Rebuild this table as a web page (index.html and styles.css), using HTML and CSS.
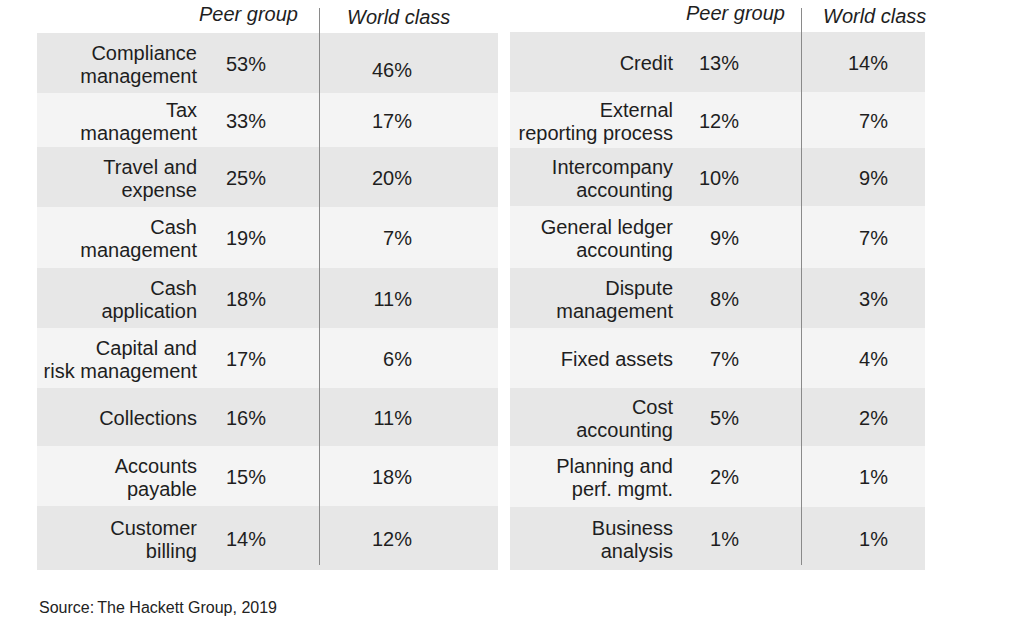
FILE: index.html
```html
<!DOCTYPE html>
<html>
<head>
<meta charset="utf-8">
<link rel="stylesheet" href="styles.css">
</head>
<body>
<div class="page">
  <div class="tables">
    <div class="tbl tbl-left">
      <div class="row head">
        <div class="hpeer">Peer group</div>
        <div class="hworld">World class</div>
      </div>
      <div class="row dark"><div class="lab">Compliance<br>management</div><div class="peer">53%</div><div class="world low">46%</div></div>
      <div class="row light"><div class="lab">Tax<br>management</div><div class="peer">33%</div><div class="world">17%</div></div>
      <div class="row dark"><div class="lab">Travel and<br>expense</div><div class="peer">25%</div><div class="world">20%</div></div>
      <div class="row light"><div class="lab">Cash<br>management</div><div class="peer">19%</div><div class="world">7%</div></div>
      <div class="row dark"><div class="lab">Cash<br>application</div><div class="peer">18%</div><div class="world">11%</div></div>
      <div class="row light"><div class="lab">Capital and<br>risk management</div><div class="peer">17%</div><div class="world">6%</div></div>
      <div class="row dark"><div class="lab">Collections</div><div class="peer">16%</div><div class="world">11%</div></div>
      <div class="row light"><div class="lab">Accounts<br>payable</div><div class="peer">15%</div><div class="world">18%</div></div>
      <div class="row dark last"><div class="lab">Customer<br>billing</div><div class="peer">14%</div><div class="world">12%</div></div>
    </div>
    <div class="tbl tbl-right">
      <div class="row head">
        <div class="hpeer">Peer group</div>
        <div class="hworld">World class</div>
      </div>
      <div class="row dark"><div class="lab">Credit</div><div class="peer">13%</div><div class="world">14%</div></div>
      <div class="row light"><div class="lab">External<br>reporting process</div><div class="peer">12%</div><div class="world">7%</div></div>
      <div class="row dark"><div class="lab">Intercompany<br>accounting</div><div class="peer">10%</div><div class="world">9%</div></div>
      <div class="row light"><div class="lab">General ledger<br>accounting</div><div class="peer">9%</div><div class="world">7%</div></div>
      <div class="row dark"><div class="lab">Dispute<br>management</div><div class="peer">8%</div><div class="world">3%</div></div>
      <div class="row light"><div class="lab">Fixed assets</div><div class="peer">7%</div><div class="world">4%</div></div>
      <div class="row dark"><div class="lab">Cost<br>accounting</div><div class="peer">5%</div><div class="world">2%</div></div>
      <div class="row light"><div class="lab">Planning and<br>perf. mgmt.</div><div class="peer">2%</div><div class="world">1%</div></div>
      <div class="row dark last"><div class="lab">Business<br>analysis</div><div class="peer">1%</div><div class="world">1%</div></div>
    </div>
  </div>
  <p class="source">Source:&thinsp;The Hackett Group, 2019</p>
</div>
</body>
</html>
```

FILE: styles.css
```css
html, body {
  margin: 0;
  padding: 0;
  background: #ffffff;
}

body {
  font-family: "Liberation Sans", Arial, sans-serif;
  color: #1e1e1e;
  width: 1017px;
  height: 641px;
  overflow: hidden;
}

.page {
  padding-left: 37px;
}

.tables {
  display: flex;
  gap: 12px;
  align-items: flex-start;
}

.tbl {
  display: grid;
  font-size: 20px;
  line-height: 23px;
}

.tbl-left {
  width: 461px;
  grid-template-rows: 33px 60px 54px 60px 61px 60px 60px 58px 60px 64px;
  --cols: 173px 109px 179px;
  --peer-pad: 53px;
  --world-pad: 86px;
  --lab-pad: 13px;
}

.tbl-right {
  width: 415px;
  grid-template-rows: 32px 60px 56px 58px 62px 60px 60px 58px 61px 63px;
  --cols: 175px 116px 124px;
  --peer-pad: 62px;
  --world-pad: 37px;
  --lab-pad: 12px;
}

.row {
  display: grid;
  grid-template-columns: var(--cols);
  align-items: center;
}

.dark { background: #e7e7e7; }
.light { background: #f4f4f4; }

.lab {
  text-align: right;
  padding-right: var(--lab-pad);
  padding-top: 3px;
}

.peer {
  text-align: right;
  padding-right: var(--peer-pad);
  padding-top: 2px;
}

.world {
  align-self: stretch;
  display: flex;
  align-items: center;
  justify-content: flex-end;
  padding-right: var(--world-pad);
  padding-top: 2px;
  border-left: 1px solid #8a8a8a;
}

.world.low {
  padding-top: 14px;
}

.last .world {
  border-left: none;
  padding-left: 1px;
  background: linear-gradient(#8a8a8a, #8a8a8a) left top / 1px calc(100% - 5px) no-repeat;
}

/* header */
.head {
  align-items: stretch;
  background: #ffffff;
}

.hpeer {
  grid-column: 1 / 3;
  text-align: right;
  font-style: italic;
}

.hworld {
  font-style: italic;
  white-space: nowrap;
  padding-left: 1px;
  background: linear-gradient(#8a8a8a, #8a8a8a) left 8px / 1px 100% no-repeat;
}

.tbl-left .hpeer { padding-top: 3px; padding-right: 21px; }
.tbl-left .hworld { padding-left: 28px; padding-top: 6px; }

.tbl-right .hpeer { padding-top: 2px; padding-right: 16px; }
.tbl-right .hworld { padding-left: 22px; padding-top: 5px; }

.source {
  margin: 28px 0 0 2px;
  font-size: 16px;
  line-height: 20px;
  color: #222222;
}
```
